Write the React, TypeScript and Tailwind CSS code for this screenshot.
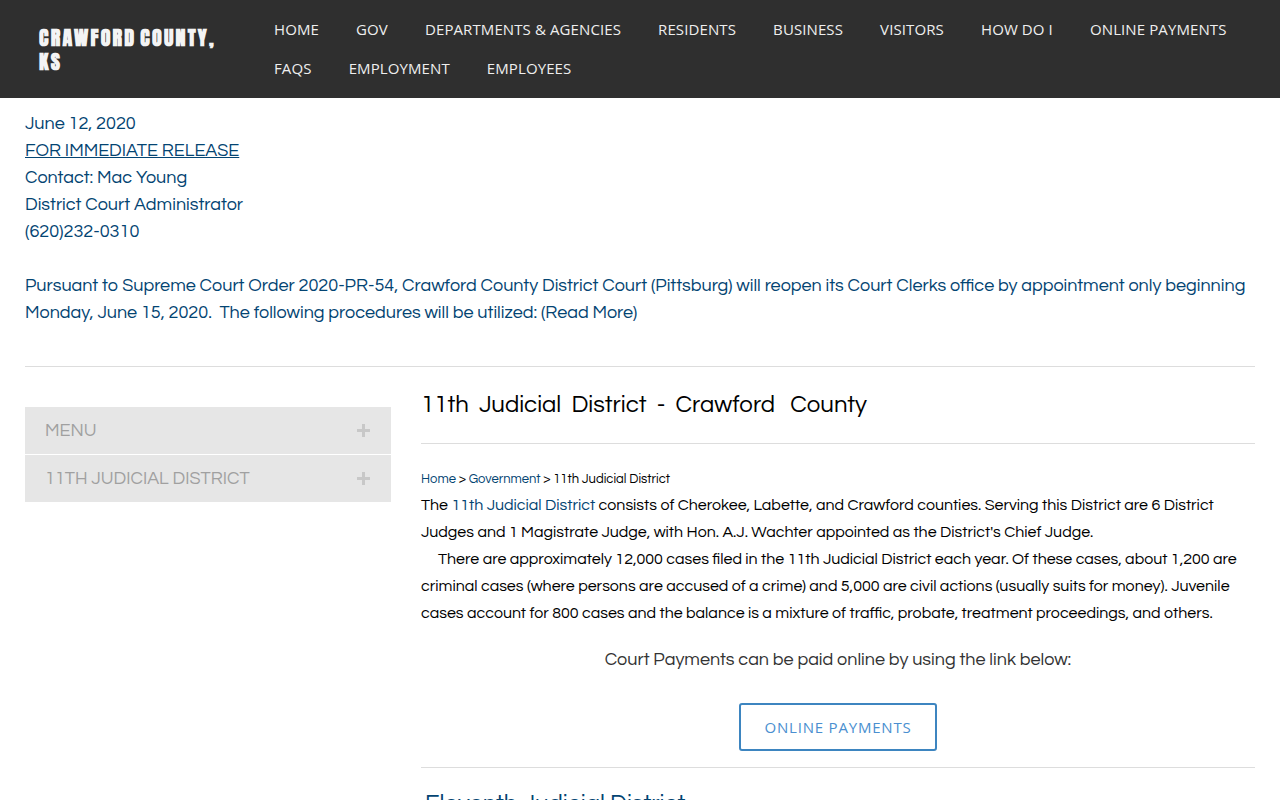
const navRows = [
  ["HOME", "GOV", "DEPARTMENTS & AGENCIES", "RESIDENTS", "BUSINESS", "VISITORS", "HOW DO I", "ONLINE PAYMENTS"],
  ["FAQS", "EMPLOYMENT", "EMPLOYEES"],
];

const body = "font-['Questrial','Lato','Liberation_Sans',sans-serif]";

function SideItem({ label }: { label: string }) {
  return (
    <div className="flex h-[47px] items-center justify-between bg-[#e6e6e6] pl-5 pr-[21px] text-[18px] text-[#a0a0a0]">
      <span>{label}</span>
      <svg width="13" height="13" viewBox="0 0 13 13" className="text-[#c8c8c8]">
        <path d="M5 0h3v5h5v3H8v5H5V8H0V5h5z" fill="currentColor" />
      </svg>
    </div>
  );
}

export default function App() {
  return (
    <div className={`h-screen overflow-hidden bg-white ${body}`}>
      <header className="flex h-[98px] bg-[#2f2f2f]">
        <div className="w-[235px] shrink-0 pl-[39px] pr-[10px] pt-[26px] font-['Anton','Bebas_Neue','Oswald','Liberation_Sans',sans-serif] text-[20px] font-bold leading-[24px] tracking-[2.2px] text-[#f4f4f4] [word-spacing:-3px]">
          CRAWFORD COUNTY, KS
        </div>
        <nav className="pl-[39px] pt-[10px] font-['Open_Sans',sans-serif] text-[15px] tracking-[0.1px] text-[#eeeeee]">
          {navRows.map((row) => (
            <div key={row[0]} className="flex h-[39px] items-center gap-[37.1px]">
              {row.map((item) => (
                <a key={item} className="whitespace-nowrap">{item}</a>
              ))}
            </div>
          ))}
        </nav>
      </header>

      <main className="px-[25px]">
        <div className="border-b border-[#dddddd] pb-[40px] pt-[12px] text-[18px] leading-[27px] text-[#034472]">
          <p>June 12, 2020</p>
          <p className="underline">FOR IMMEDIATE RELEASE</p>
          <p>Contact: Mac Young</p>
          <p>District Court Administrator</p>
          <p>(620)232-0310</p>
          <p className="mt-[27px]">
            Pursuant to Supreme Court Order 2020-PR-54, Crawford County District Court (Pittsburg) will reopen its Court Clerks office by appointment only beginning
            Monday, June 15, 2020.&nbsp; The following procedures will be utilized: (Read More)
          </p>
        </div>

        <div className="flex gap-[30px]">
          <aside className="w-[366px] shrink-0 pt-10">
            <div className="flex flex-col gap-px">
              <SideItem label="MENU" />
              <SideItem label="11TH JUDICIAL DISTRICT" />
            </div>
          </aside>

          <section className="min-w-0 flex-1">
            <h1 className="h-[77px] border-b border-[#dddddd] pb-px pt-[20px] text-[24px] leading-[36px] text-black [word-spacing:5px]">
              11th Judicial District - Crawford <span className="ml-[5px]">County</span>
            </h1>
            <p className="mt-[26px] text-[13px] leading-[18px] text-black">
              <a className="text-[#034472]">Home</a> &gt; <a className="text-[#034472]">Government</a> &gt; 11th Judicial District
            </p>
            <div className="mt-[4px] text-[16px] leading-[27px] text-black">
              <p>
                The <a className="text-[#034472]">11th Judicial District</a> consists of Cherokee, Labette, and Crawford counties. Serving this District are 6 District Judges and 1 Magistrate Judge, with Hon. A.J. Wachter appointed as the District's Chief Judge.
              </p>
              <p className="indent-[17px]">
                There are approximately 12,000 cases filed in the 11th Judicial District each year. Of these cases, about 1,200 are criminal cases (where persons are accused of a crime) and 5,000 are civil actions (usually suits for money). Juvenile cases account for 800 cases and the balance is a mixture of traffic, probate, treatment proceedings, and others.
              </p>
            </div>
            <p className="mt-[19px] text-center text-[18px] leading-[27px] text-[#333333]">
              Court Payments can be paid online by using the link below:
            </p>
            <div className="mt-[30px] flex justify-center border-b border-[#dddddd] pb-4">
              <a className="flex h-[48px] w-[198px] items-center justify-center rounded-[3px] border-2 border-[#3d85c0] font-['Open_Sans',sans-serif] text-[15px] tracking-[0.8px] text-[#4a8fd0]">
                ONLINE PAYMENTS
              </a>
            </div>
            <h2 className="mt-[20px] pl-1 text-[24px] leading-[32px] text-[#034472]">Eleventh Judicial District</h2>
          </section>
        </div>
      </main>
    </div>
  );
}
